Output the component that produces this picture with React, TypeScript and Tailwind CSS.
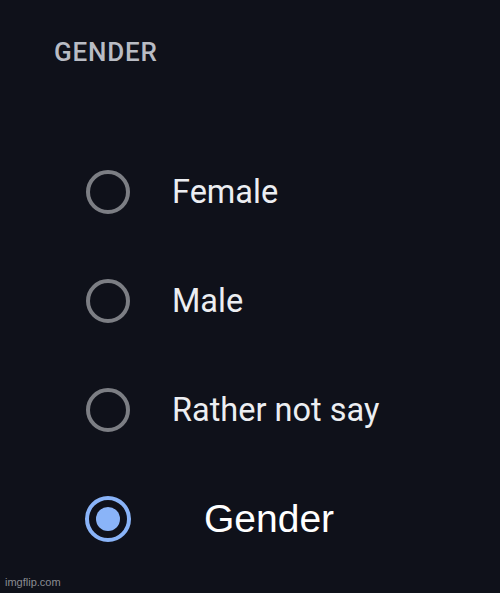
const options = ["Female", "Male", "Rather not say"];

function Radio({ checked }: { checked?: boolean }) {
  if (checked) {
    return (
      <span className="flex h-[46px] w-[46px] items-center justify-center rounded-full border-[4px] border-[#8ab4f8]">
        <span className="h-[24px] w-[24px] rounded-full bg-[#8ab4f8]" />
      </span>
    );
  }
  return <span className="block h-[44px] w-[44px] rounded-full border-[4px] border-[#7c7e84]" />;
}

export default function App() {
  return (
    <div
      className="relative flex h-[593px] w-[500px] flex-col bg-[#0f111a] text-white"
      style={{ fontFamily: "Roboto, 'Noto Sans', sans-serif" }}
    >
      <h2 className="pl-[54px] pt-[33px] text-[26px] font-medium tracking-[0.03em] text-[#b9bcc4]">
        GENDER
      </h2>
      <ul className="mt-[98px] flex flex-col gap-[65px] pl-[86px]">
        {options.map((o) => (
          <li key={o} className="flex h-[44px] items-center">
            <Radio />
            <span className="ml-[42px] text-[32.5px] text-[#eceef2]">{o}</span>
          </li>
        ))}
        <li className="-ml-[1px] flex h-[44px] items-center">
          <Radio checked />
          <span
            className="ml-[73px] text-[39px] text-white"
            style={{ fontFamily: "'Liberation Sans', Arial, sans-serif" }}
          >
            Gender
          </span>
        </li>
      </ul>
      <span
        className="absolute bottom-[3px] left-[5px] text-[11px] text-[#8a8c92]"
        style={{ fontFamily: "'Liberation Sans', Arial, sans-serif" }}
      >
        imgflip.com
      </span>
    </div>
  );
}
